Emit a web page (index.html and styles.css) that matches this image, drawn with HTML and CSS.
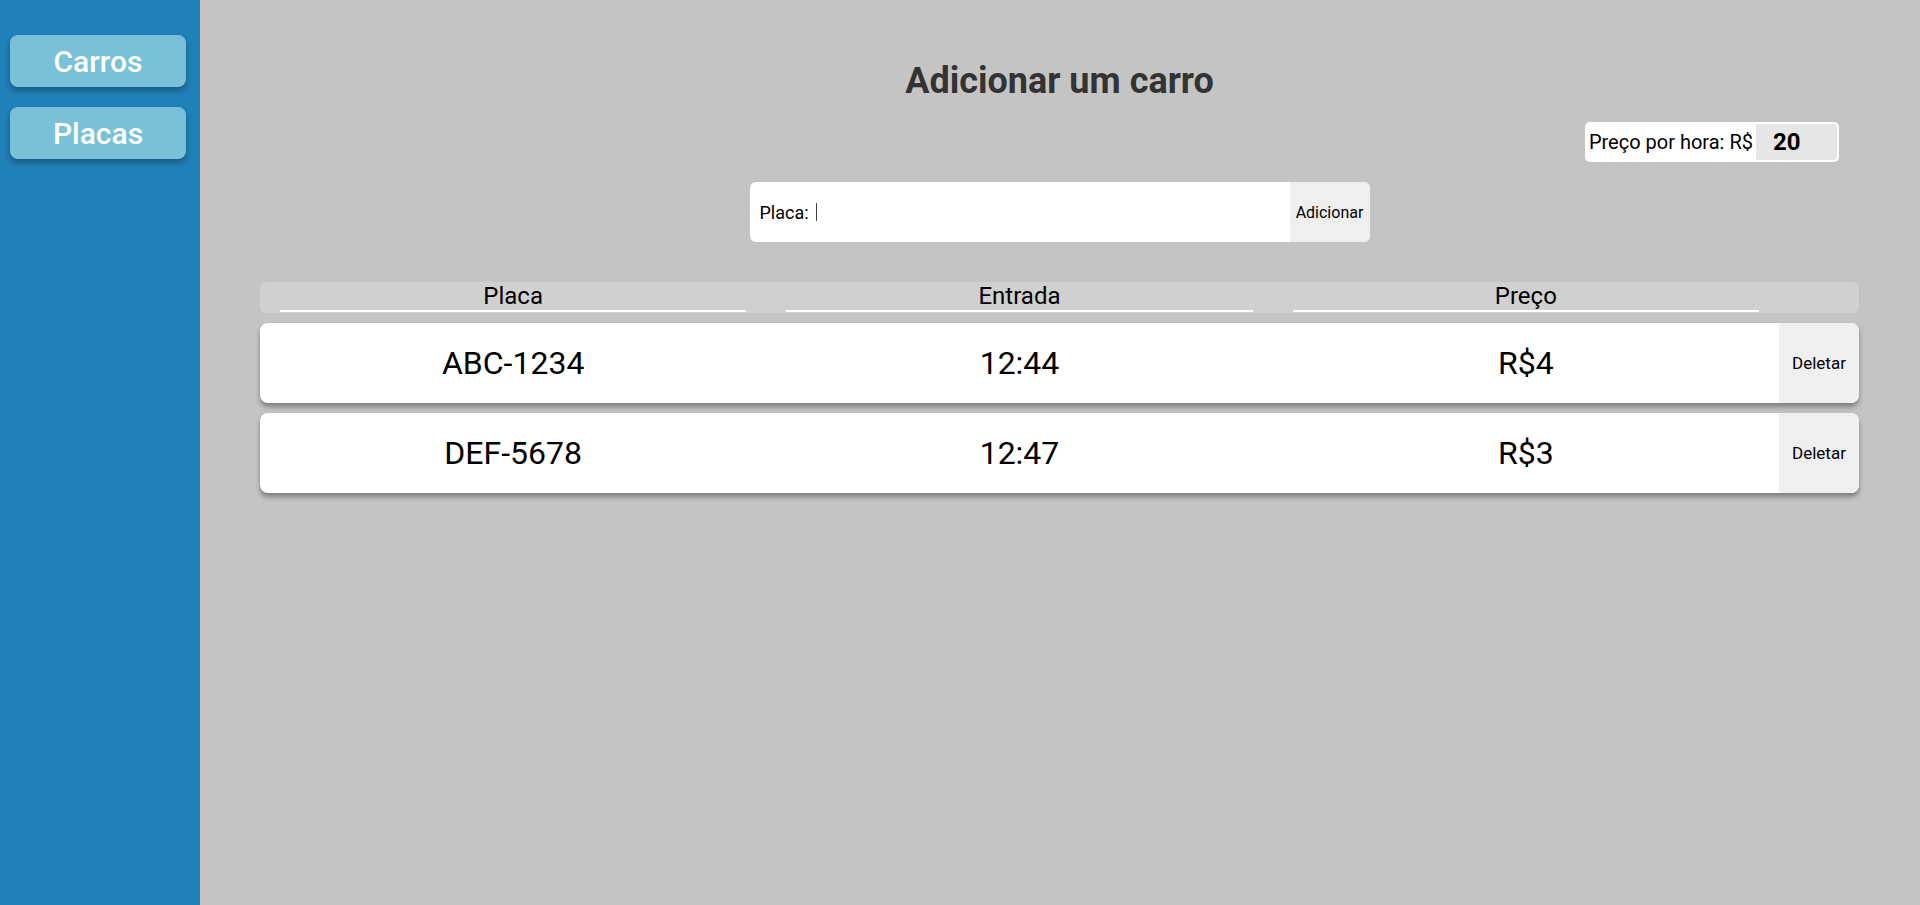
FILE: index.html
```html
<!DOCTYPE html>
<html lang="pt-BR">
<head>
<meta charset="utf-8">
<title>Estacionamento</title>
<link rel="stylesheet" href="styles.css">
</head>
<body>
  <nav class="sidebar">
    <button class="nav-btn">Carros</button>
    <button class="nav-btn">Placas</button>
  </nav>
  <main class="main">
    <h1 class="title">Adicionar um carro</h1>
    <div class="price-row">
      <label class="price-box">
        <span class="price-label">Preço por hora: R$</span>
        <input class="price-input" type="text" value="20">
      </label>
    </div>
    <form class="add-form">
      <label class="plate-label" for="placa">Placa:</label>
      <input class="plate-input" id="placa" type="text">
      <button class="add-btn" type="button">Adicionar</button>
    </form>
    <section class="table">
      <div class="table-head">
        <div class="head-cell">Placa</div>
        <div class="head-cell">Entrada</div>
        <div class="head-cell">Preço</div>
      </div>
      <div class="table-row">
        <div class="cell">ABC-1234</div>
        <div class="cell">12:44</div>
        <div class="cell">R$4</div>
        <button class="del-btn">Deletar</button>
      </div>
      <div class="table-row">
        <div class="cell">DEF-5678</div>
        <div class="cell">12:47</div>
        <div class="cell">R$3</div>
        <button class="del-btn">Deletar</button>
      </div>
    </section>
  </main>
</body>
</html>
```
FILE: styles.css
```css
* { box-sizing: border-box; }

html, body {
  margin: 0;
  height: 100%;
}

body {
  display: flex;
  font-family: Roboto, "Liberation Sans", sans-serif;
  background: #c4c4c4;
  color: #000;
}

.sidebar {
  width: 200px;
  flex: none;
  background: #2181b9;
  display: flex;
  flex-direction: column;
  gap: 20px;
  padding: 35px 14px 0 10px;
}

.nav-btn {
  height: 52px;
  border: none;
  border-radius: 8px;
  background: #79c0d9;
  color: #fff;
  font-family: Roboto, "Liberation Sans", sans-serif;
  font-size: 30px;
  font-weight: 500;
  box-shadow: 0 4px 6px rgba(0, 0, 0, 0.3);
  cursor: pointer;
  padding: 0;
}

.main {
  flex: 1;
  padding: 60px 61px 0 60px;
  display: flex;
  flex-direction: column;
}

.title {
  margin: 0;
  text-align: center;
  font-size: 36px;
  line-height: 42px;
  font-weight: 700;
  color: #333;
}

.price-row {
  margin-top: 20px;
  display: flex;
  justify-content: flex-end;
  padding-right: 20px;
}

.price-box {
  display: flex;
  align-items: center;
  gap: 3px;
  height: 40px;
  background: #fff;
  border-radius: 5px;
  padding: 2px 2px 2px 4px;
}

.price-label {
  font-size: 20px;
  white-space: nowrap;
}

.price-input {
  width: 81px;
  height: 36px;
  border: none;
  outline: none;
  background: #e6e6e6;
  border-radius: 0 4px 4px 0;
  padding: 0 0 0 17px;
  font-family: Roboto, "Liberation Sans", sans-serif;
  font-size: 24px;
  font-weight: 700;
  color: #000;
}

.add-form {
  margin: 20px auto 0;
  width: 620px;
  height: 60px;
  background: #fff;
  border-radius: 6px;
  overflow: hidden;
  display: flex;
  align-items: center;
}

.plate-label {
  font-size: 18px;
  padding: 0 6px 0 10px;
  white-space: nowrap;
}

.plate-input {
  flex: 1;
  align-self: stretch;
  border: none;
  outline: none;
  font-family: Roboto, "Liberation Sans", sans-serif;
  font-size: 18px;
  background: linear-gradient(#444, #444) no-repeat 1px center / 1px 18px;
  padding: 0 4px;
}

.add-btn {
  width: 80px;
  align-self: stretch;
  border: none;
  background: #efefef;
  font-family: Roboto, "Liberation Sans", sans-serif;
  font-size: 16px;
  color: #000;
  padding: 0;
  cursor: pointer;
}

.table {
  margin-top: 40px;
  display: flex;
  flex-direction: column;
  gap: 10px;
}

.table-head {
  display: grid;
  grid-template-columns: 1fr 1fr 1fr 80px;
  background: #d0d0d0;
  border-radius: 6px;
  height: 31px;
  padding-bottom: 1px;
}

.head-cell {
  margin: 0 20px;
  border-bottom: 2px solid #fff;
  text-align: center;
  font-size: 24px;
  line-height: 28px;
}

.table-row {
  display: grid;
  grid-template-columns: 1fr 1fr 1fr 80px;
  height: 80px;
  background: #fff;
  border-radius: 8px;
  overflow: hidden;
  box-shadow: 0 4px 5px rgba(0, 0, 0, 0.35);
}

.cell {
  display: flex;
  align-items: center;
  justify-content: center;
  font-size: 32px;
}

.del-btn {
  border: none;
  background: #efefef;
  font-family: Roboto, "Liberation Sans", sans-serif;
  font-size: 17px;
  color: #000;
  padding: 0;
  cursor: pointer;
}
```
